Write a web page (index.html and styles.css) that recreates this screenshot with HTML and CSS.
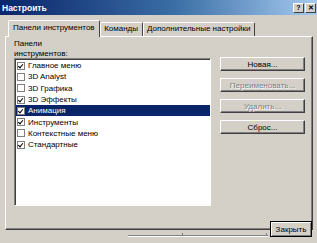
FILE: index.html
```html
<!DOCTYPE html>
<html lang="ru">
<head>
  <meta charset="UTF-8" />
  <title>Настроить</title>
  <link rel="stylesheet" href="styles.css">
</head>
<body>
  <div class="titlebar">
    <span class="title">Настроить</span>
    <div class="title-buttons">
      <span class="tbtn">?</span>
      <span class="tbtn">&#x2715;</span>
    </div>
  </div>

  <div class="tabs">
    <div class="tab active">Панели инструментов</div>
    <div class="tab">Команды</div>
    <div class="tab">Дополнительные настройки</div>
  </div>

  <div class="panel">
    <div class="left">
      <div class="label">Панели<br>инструментов:</div>
      <ul class="list">
        <li class="row"><span class="box checked"></span>Главное меню</li>
        <li class="row"><span class="box"></span>3D Analyst</li>
        <li class="row"><span class="box"></span>3D Графика</li>
        <li class="row"><span class="box checked"></span>3D Эффекты</li>
        <li class="row selected"><span class="box checked"></span>Анимация</li>
        <li class="row"><span class="box checked"></span>Инструменты</li>
        <li class="row"><span class="box"></span>Контекстные меню</li>
        <li class="row"><span class="box checked"></span>Стандартные</li>
      </ul>
    </div>
    <div class="actions">
      <button class="btn">Новая...</button>
      <button class="btn" disabled>Переименовать...</button>
      <button class="btn" disabled>Удалить...</button>
      <button class="btn">Сброс...</button>
    </div>
  </div>

  <div class="footer">
    <div class="rule"><span class="tick one"></span><span class="tick two"></span></div>
    <button class="btn default">Закрыть</button>
  </div>
</body>
</html>
```

FILE: styles.css
```css
body {
  margin: 0;
  width: 317px;
  height: 243px;
  overflow: hidden;
  background: #d4d0c8;
  font-family: "Liberation Sans", Arial, sans-serif;
  font-size: 8px;
  color: #000;
}

.titlebar {
  height: 15px;
  display: flex;
  align-items: center;
  justify-content: space-between;
  padding: 0 1px 0 2px;
  background: linear-gradient(90deg, #0a246a, #3a6ea5 55%, #a6caf0);
  color: #fff;
  font-weight: bold;
  font-size: 8.5px;
}

.title-buttons {
  display: flex;
  gap: 1px;
}

.tbtn {
  width: 11px;
  height: 10px;
  box-sizing: border-box;
  background: #d4d0c8;
  border: 1px solid;
  border-color: #fff #404040 #404040 #fff;
  color: #000;
  font-size: 7px;
  font-weight: bold;
  line-height: 8px;
  text-align: center;
}

.tabs {
  display: flex;
  align-items: flex-end;
  height: 16px;
  margin-top: 5px;
  padding-left: 8px;
}

.tab {
  height: 14px;
  box-sizing: border-box;
  padding: 0 3.5px;
  border: 1px solid;
  border-bottom: none;
  border-color: #fff #404040 transparent #fff;
  border-radius: 2px 2px 0 0;
  line-height: 12px;
  background: #d4d0c8;
}

.tab.active {
  height: 17px;
  margin-bottom: -1px;
  padding: 0 4px;
  position: relative;
  z-index: 1;
  line-height: 14px;
}

.panel {
  height: 194px;
  box-sizing: border-box;
  margin: 0 4px 0 5px;
  padding: 2px 7px 0 8px;
  display: flex;
  gap: 9px;
  border: 1px solid;
  border-color: #fff #404040 #404040 #fff;
  box-shadow: inset -1px -1px #808080;
}

.label {
  line-height: 9.5px;
}

.list {
  list-style: none;
  margin: 0;
  width: 197px;
  height: 148px;
  box-sizing: border-box;
  background: #fff;
  border: 1px solid;
  border-color: #808080 #fff #fff #808080;
  box-shadow: inset 1px 1px #404040;
  padding: 1px 0 0 1px;
}

.row {
  height: 11.3px;
  display: flex;
  align-items: center;
  padding-left: 1px;
  white-space: nowrap;
}

.row.selected {
  background: #0a246a;
  color: #fff;
}

.box {
  width: 8px;
  height: 8px;
  box-sizing: border-box;
  margin-right: 3px;
  background: #fff;
  border: 1px solid #808080;
  position: relative;
}

.box.checked::after {
  content: "";
  position: absolute;
  left: 1px;
  top: 0;
  width: 2px;
  height: 4px;
  border: solid #000;
  border-width: 0 1.5px 1.5px 0;
  transform: rotate(40deg);
}

.actions {
  display: flex;
  flex-direction: column;
  gap: 7px;
  padding-top: 18px;
}

.btn {
  width: 85px;
  height: 14px;
  box-sizing: border-box;
  padding: 0;
  background: #d4d0c8;
  border: 1px solid;
  border-color: #fff #404040 #404040 #fff;
  box-shadow: inset -1px -1px #808080;
  font-family: inherit;
  font-size: 8px;
  color: #000;
}

.btn:disabled {
  color: #808080;
  text-shadow: 1px 1px #fff;
}

.footer {
  display: flex;
  align-items: flex-start;
}

.rule {
  position: relative;
  width: 140px;
  margin: 5px 0 0 128px;
  border-top: 1px solid #808080;
  border-bottom: 1px solid #fff;
}

.tick {
  position: absolute;
  top: -3px;
  width: 1px;
  height: 3px;
  background: #808080;
}

.tick.one { left: 54px; }
.tick.two { left: 138px; }

.btn.default {
  width: 42px;
  height: 16px;
  margin: -9px 0 0 2px;
  border: 1px solid #000;
  box-shadow: inset 1px 1px #fff, inset -1px -1px #808080;
}
```
